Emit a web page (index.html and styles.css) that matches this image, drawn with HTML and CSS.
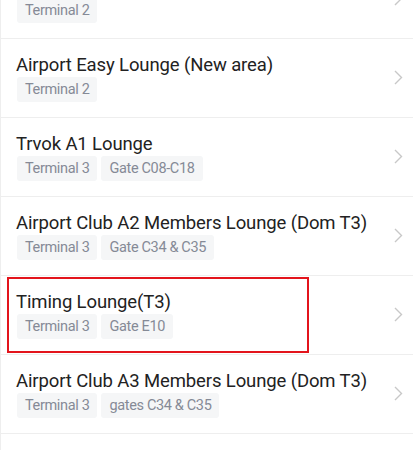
FILE: index.html
```html
<!DOCTYPE html>
<html lang="en">
<head>
    <meta charset="UTF-8">
    <meta name="viewport" content="width=device-width, initial-scale=1.0">
    <title>Lounges</title>
    <link rel="stylesheet" href="styles.css">
</head>
<body>
    <ul class="lounge-list">
        <li class="lounge">
            <div class="info">
                <div class="name">Airport Lounge</div>
                <div class="tags"><span class="tag">Terminal 2</span></div>
            </div>
            <svg class="arrow" width="9" height="15" viewBox="0 0 9 15"><path d="M1 1l6.5 6.5L1 14" fill="none" stroke="#c8c8c8" stroke-width="1.4"/></svg>
        </li>
        <li class="lounge">
            <div class="info">
                <div class="name">Airport Easy Lounge (New area)</div>
                <div class="tags"><span class="tag">Terminal 2</span></div>
            </div>
            <svg class="arrow" width="9" height="15" viewBox="0 0 9 15"><path d="M1 1l6.5 6.5L1 14" fill="none" stroke="#c8c8c8" stroke-width="1.4"/></svg>
        </li>
        <li class="lounge">
            <div class="info">
                <div class="name">Trvok A1 Lounge</div>
                <div class="tags"><span class="tag">Terminal 3</span><span class="tag">Gate C08-C18</span></div>
            </div>
            <svg class="arrow" width="9" height="15" viewBox="0 0 9 15"><path d="M1 1l6.5 6.5L1 14" fill="none" stroke="#c8c8c8" stroke-width="1.4"/></svg>
        </li>
        <li class="lounge">
            <div class="info">
                <div class="name">Airport Club A2 Members Lounge (Dom T3)</div>
                <div class="tags"><span class="tag">Terminal 3</span><span class="tag">Gate C34 &amp; C35</span></div>
            </div>
            <svg class="arrow" width="9" height="15" viewBox="0 0 9 15"><path d="M1 1l6.5 6.5L1 14" fill="none" stroke="#c8c8c8" stroke-width="1.4"/></svg>
        </li>
        <li class="lounge selected">
            <div class="info">
                <div class="name">Timing Lounge(T3)</div>
                <div class="tags"><span class="tag">Terminal 3</span><span class="tag">Gate E10</span></div>
            </div>
            <svg class="arrow" width="9" height="15" viewBox="0 0 9 15"><path d="M1 1l6.5 6.5L1 14" fill="none" stroke="#c8c8c8" stroke-width="1.4"/></svg>
            <div class="highlight"></div>
        </li>
        <li class="lounge">
            <div class="info">
                <div class="name">Airport Club A3 Members Lounge (Dom T3)</div>
                <div class="tags"><span class="tag">Terminal 3</span><span class="tag">gates C34 &amp; C35</span></div>
            </div>
            <svg class="arrow" width="9" height="15" viewBox="0 0 9 15"><path d="M1 1l6.5 6.5L1 14" fill="none" stroke="#c8c8c8" stroke-width="1.4"/></svg>
        </li>
        <li class="lounge">
            <div class="info">
                <div class="name">(国际贵宾厅)</div>
                <div class="tags"><span class="tag">Terminal 3</span></div>
            </div>
            <svg class="arrow" width="9" height="15" viewBox="0 0 9 15"><path d="M1 1l6.5 6.5L1 14" fill="none" stroke="#c8c8c8" stroke-width="1.4"/></svg>
        </li>
    </ul>
</body>
</html>
```

FILE: styles.css
```css
body {
    margin: 0;
    background-color: #fff;
    font-family: Roboto, "Noto Sans CJK SC", sans-serif;
    overflow: hidden;
}
.lounge-list {
    list-style: none;
    margin: -40px 0 0 0;
    padding: 0;
    border-left: 1px solid #eeeeee;
}
.lounge {
    position: relative;
    display: flex;
    align-items: center;
    padding: 14px 10px 15px 15px;
    border-bottom: 1px solid #eeeeee;
}
.info {
    flex: 1;
}
.name {
    font-size: 18.5px;
    line-height: 24px;
    letter-spacing: -0.12px;
    color: #222;
}
.tags {
    display: flex;
    gap: 4px;
    margin-left: 1px;
}
.tag {
    height: 25px;
    line-height: 25px;
    padding: 0 8px;
    font-size: 14.5px;
    letter-spacing: -0.35px;
    color: #858a96;
    background-color: #f5f6f7;
    border-radius: 3px;
}
.arrow {
    flex: none;
}
.highlight {
    position: absolute;
    left: 6px;
    top: 1px;
    width: 298px;
    height: 72px;
    border: 2px solid #e3141c;
}
```
